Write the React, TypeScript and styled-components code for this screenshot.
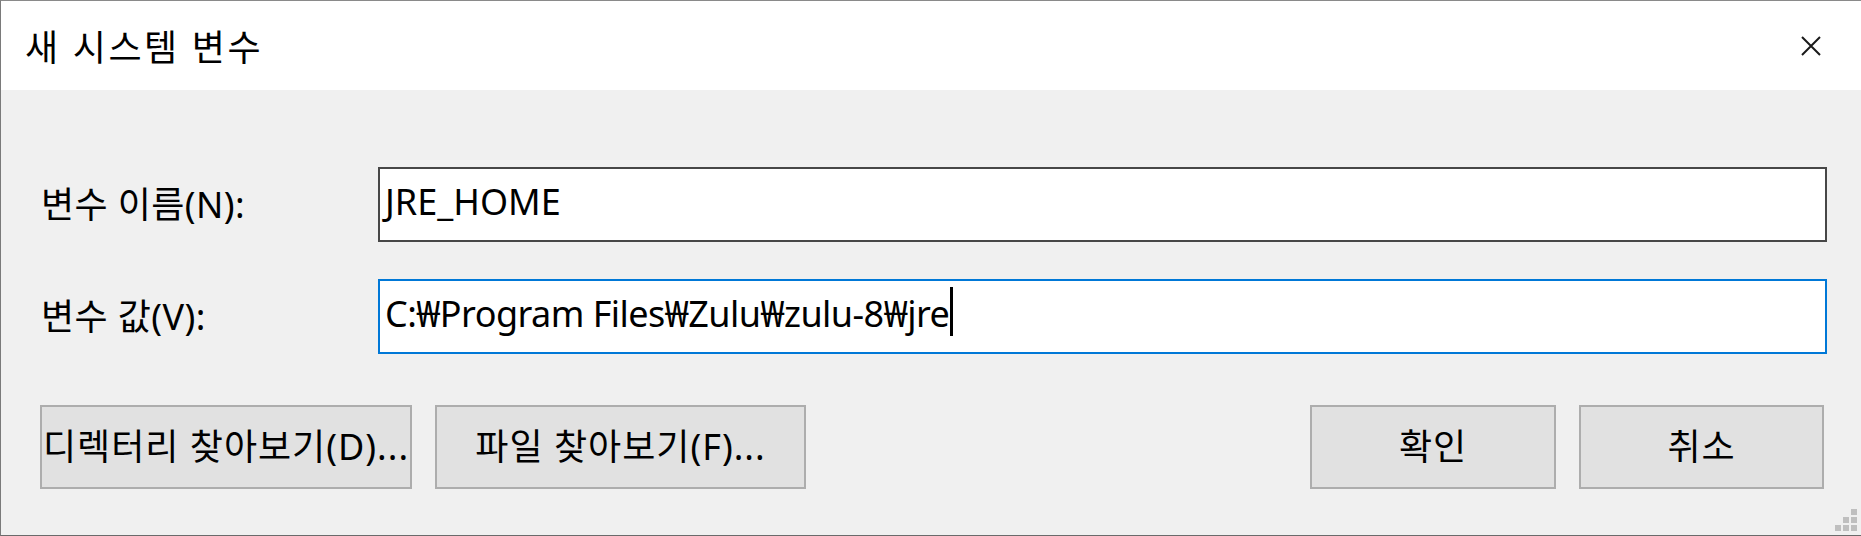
import styled, { createGlobalStyle } from "styled-components";

const GlobalStyle = createGlobalStyle`
  html, body {
    margin: 0;
    padding: 0;
    background: #f0f0f0;
  }
  body {
    font-family: "Noto Sans", "Noto Sans CJK KR", sans-serif;
    color: #000;
  }
`;

const App = () => {
  return (
    <>
      <GlobalStyle />
      <Window>
        <TitleBar>
          <Title>새 시스템 변수</Title>
          <CloseButton aria-label="닫기">
            <svg width="20" height="20" viewBox="0 0 20 20">
              <path d="M1 1 L19 19 M19 1 L1 19" stroke="#1a1a1a" strokeWidth="2" fill="none" />
            </svg>
          </CloseButton>
        </TitleBar>
        <Body>
          <Fields>
            <Label>변수 이름(N):</Label>
            <TextBox>JRE_HOME</TextBox>
            <Label>변수 값(V):</Label>
            <TextBox $focused>
              C:₩Program Files₩Zulu₩zulu-8₩jre
              <Caret />
            </TextBox>
          </Fields>
          <ButtonRow>
            <ButtonGroup>
              <Button $width={372}>디렉터리 찾아보기(D)...</Button>
              <Button $width={371}>파일 찾아보기(F)...</Button>
            </ButtonGroup>
            <ButtonGroup>
              <Button $width={246}>확인</Button>
              <Button $width={245}>취소</Button>
            </ButtonGroup>
          </ButtonRow>
        </Body>
        <Grip width="22" height="22" viewBox="0 0 22 22">
          <rect x="16" y="0" width="6" height="6" fill="#bfbfbf" />
          <rect x="8" y="8" width="6" height="6" fill="#bfbfbf" />
          <rect x="16" y="8" width="6" height="6" fill="#bfbfbf" />
          <rect x="0" y="16" width="6" height="6" fill="#bfbfbf" />
          <rect x="8" y="16" width="6" height="6" fill="#bfbfbf" />
          <rect x="16" y="16" width="6" height="6" fill="#bfbfbf" />
        </Grip>
      </Window>
    </>
  );
};

const Window = styled.div`
  position: relative;
  box-sizing: border-box;
  width: 1861px;
  height: 536px;
  border-left: 1px solid #7a7a7a;
  border-top: 1px solid #8a8a8a;
  border-bottom: 1px solid #6a6a6a;
  background: #f0f0f0;
  display: flex;
  flex-direction: column;
  overflow: hidden;
`;

const TitleBar = styled.div`
  height: 89px;
  background: #ffffff;
  display: flex;
  align-items: center;
  justify-content: space-between;
  padding: 0 40px 0 24px;
`;

const Title = styled.div`
  font-size: 36px;
  line-height: 1.2;
  padding-top: 4px;
  letter-spacing: 2.6px;
`;

const CloseButton = styled.div`
  width: 20px;
  height: 20px;
  display: flex;
  align-items: center;
  justify-content: center;
`;

const Body = styled.div`
  padding: 77px 34px 0 39px;
  display: flex;
  flex-direction: column;
  gap: 51px;
`;

const Fields = styled.div`
  display: grid;
  grid-template-columns: 338px 1fr;
  row-gap: 37px;
  align-items: center;
`;

const Label = styled.div`
  font-size: 36px;
  line-height: 1.2;
  padding-left: 1px;
  letter-spacing: 0.4px;
`;

const TextBox = styled.div<{ $focused?: boolean }>`
  box-sizing: border-box;
  height: 75px;
  background: #ffffff;
  border: 2px solid ${(p) => (p.$focused ? "#0078d7" : "#474747")};
  display: flex;
  align-items: center;
  padding: 0 0 6px 5px;
  font-size: 36px;
  line-height: 1.2;
  white-space: pre;
  letter-spacing: ${(p) => (p.$focused ? "-0.55px" : "0")};
`;

const Caret = styled.span`
  display: inline-block;
  align-self: flex-start;
  width: 3px;
  height: 49px;
  margin-top: 6px;
  margin-left: 1px;
  background: #000;
`;

const ButtonRow = styled.div`
  display: flex;
  justify-content: space-between;
  padding-right: 3px;
`;

const ButtonGroup = styled.div`
  display: flex;
  gap: 23px;
`;

const Button = styled.div<{ $width: number }>`
  box-sizing: border-box;
  width: ${(p) => p.$width}px;
  height: 84px;
  background: #e1e1e1;
  border: 2px solid #adadad;
  display: flex;
  align-items: center;
  justify-content: center;
  font-size: 36px;
  line-height: 1.2;
  white-space: nowrap;
  letter-spacing: 1px;
`;

const Grip = styled.svg`
  position: absolute;
  right: 4px;
  bottom: 4px;
`;

export default App;
